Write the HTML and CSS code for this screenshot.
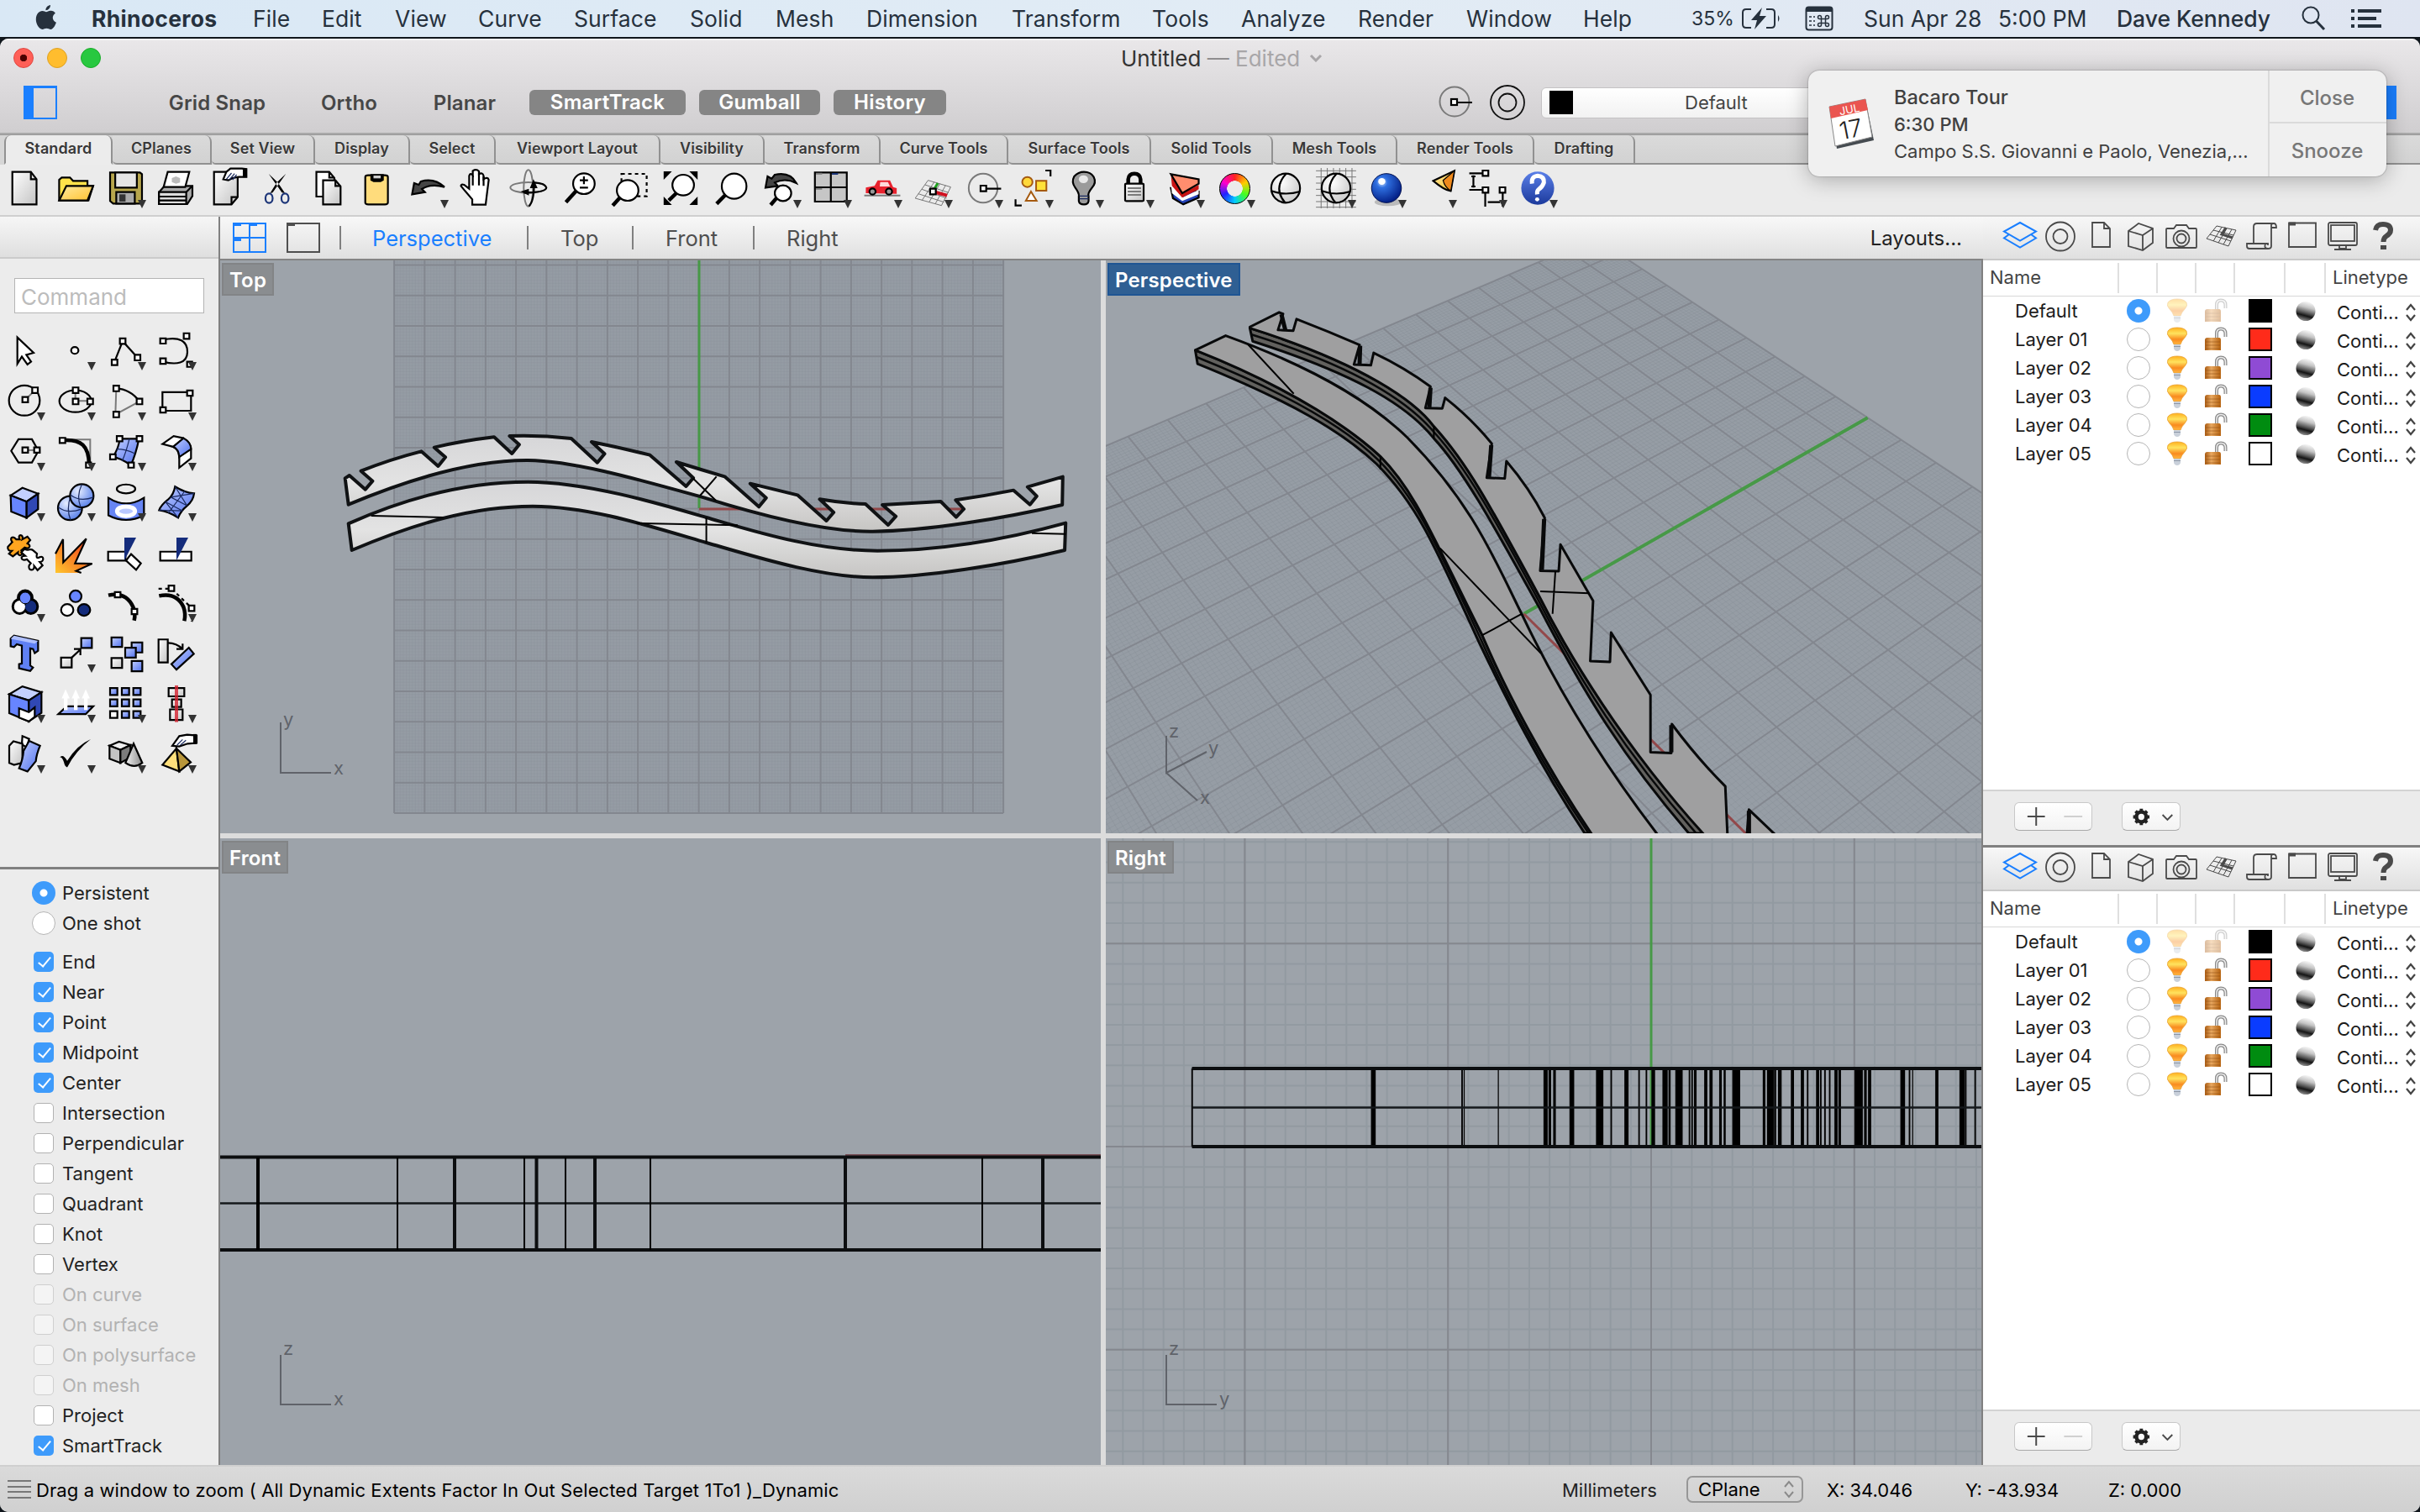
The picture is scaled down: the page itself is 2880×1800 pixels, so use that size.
FILE: index.html
```html
<!DOCTYPE html>
<html lang="en">
<head>
<meta charset="utf-8">
<title>Untitled</title>
<link rel="stylesheet" href="styles.css">
</head>
<body>
<svg class="defs" width="0" height="0">
  <defs>
    <linearGradient id="blue" x1="0" y1="0" x2="1" y2="1"><stop offset="0" stop-color="#c3d0ff"/><stop offset="1" stop-color="#4f70ee"/></linearGradient>
    <linearGradient id="grey" x1="0" y1="0" x2="1" y2="1"><stop offset="0" stop-color="#fff"/><stop offset="1" stop-color="#c4c4c4"/></linearGradient>
    <linearGradient id="cone" x1="0" y1="0" x2="1" y2="0"><stop offset="0" stop-color="#f2f2f2"/><stop offset="1" stop-color="#8a8a8a"/></linearGradient>
    <linearGradient id="gold" x1="0" y1="0" x2="1" y2="1"><stop offset="0" stop-color="#ffe9a0"/><stop offset="1" stop-color="#ffc22e"/></linearGradient>
    <linearGradient id="fire" x1="0" y1="1" x2="1" y2="0"><stop offset="0" stop-color="#ffc62e"/><stop offset=".8" stop-color="#f5511e"/></linearGradient>
    <radialGradient id="ball" cx=".35" cy=".3" r=".8"><stop offset="0" stop-color="#e6edff"/><stop offset="1" stop-color="#4d78e8"/></radialGradient>
    <radialGradient id="white-ball" cx=".35" cy=".3" r=".8"><stop offset="0" stop-color="#fff"/><stop offset="1" stop-color="#c8c8c8"/></radialGradient>
    <radialGradient id="deep-ball" cx=".35" cy=".3" r=".75"><stop offset="0" stop-color="#cfe2ff"/><stop offset=".25" stop-color="#2f6fe0"/><stop offset="1" stop-color="#001a80"/></radialGradient>
    <linearGradient id="help" x1="0" y1="0" x2="0" y2="1"><stop offset="0" stop-color="#5a7fe8"/><stop offset="1" stop-color="#1c3a9c"/></linearGradient>
    <linearGradient id="bulb" x1="0" y1="0" x2="0" y2="1"><stop offset="0" stop-color="#ffb01e"/><stop offset=".35" stop-color="#ffe35e"/><stop offset=".7" stop-color="#f98a1f"/><stop offset="1" stop-color="#ffb640"/></linearGradient>
    <linearGradient id="lock" x1="0" y1="0" x2="1" y2="0"><stop offset="0" stop-color="#a85a12"/><stop offset=".4" stop-color="#e8a860"/><stop offset="1" stop-color="#b5620f"/></linearGradient>
    <linearGradient id="mat" x1=".62" y1="0" x2=".35" y2="1"><stop offset="0" stop-color="#fafafa"/><stop offset=".3" stop-color="#c4c4c4"/><stop offset=".58" stop-color="#555"/><stop offset=".72" stop-color="#151515"/><stop offset="1" stop-color="#9a9a9a"/></linearGradient>
    <linearGradient id="rib" x1="0" y1="0" x2="0" y2="1"><stop offset="0" stop-color="#d6d6d8"/><stop offset=".5" stop-color="#e3e3e3"/><stop offset="1" stop-color="#c6c5c3"/></linearGradient>
  </defs>
</svg>

<header class="menubar">
  <svg class="apple" viewBox="0 0 26 32"><path d="M18 1c.2 3-2.6 6.400-5.600 6.200C12.200 4.300 15 1.200 18 1zM13 9.200c1.300 0 3-1.600 5.600-1.400 2.300.1 4.200 1.200 5.300 3-4.600 2.900-3.900 8.900 1 10.900-1 3-3.500 8.100-6.500 8.200-2 0-2.700-1.200-5-1.200s-3.100 1.200-5 1.200C4.500 29.700.8 23.700.8 18.200.8 11.500 4.800 8 8.300 8c2.200 0 3.600 1.200 4.700 1.200z"/></svg>
  <nav class="menus">
    <b>Rhinoceros</b><span>File</span><span>Edit</span><span>View</span><span>Curve</span><span>Surface</span><span>Solid</span><span>Mesh</span><span>Dimension</span><span>Transform</span><span>Tools</span><span>Analyze</span><span>Render</span><span>Window</span><span>Help</span>
  </nav>
  <div class="status-menus">
    <span class="pct">35%</span>
    <svg viewBox="0 0 48 26"><path d="M12 2H6Q2 2 2 6V20Q2 24 6 24H12M30 2H36Q40 2 40 6V20Q40 24 36 24H30" class="l2"/><path d="M44 9q3 4 0 8z"/><path d="M25 0L12 15H19L16 26L30 10H22z"/></svg>
    <svg viewBox="0 0 34 30"><rect x="1.500" y="1.500" width="31" height="27" rx="3" class="l2"/><path d="M2 2H32V7H2z"/><path d="M5 13h3M5 18h3M5 23h3M10 13h2M10 18h2M10 23h2" class="l1"/><path d="M19.500 15.500h5v5h-5zM19.500 15.500h-2a2 2 0 1 1 2-2zM24.500 15.500v-2a2 2 0 1 1 2 2zM19.500 20.500v2a2 2 0 1 1-2-2zM24.500 20.500h2a2 2 0 1 1-2 2z" class="l1"/></svg>
    <span class="date">Sun Apr 28</span><span>5:00 PM</span><span class="user">Dave Kennedy</span>
    <svg viewBox="0 0 30 30"><circle cx="12" cy="11" r="9.500" class="l2"/><path d="M18.500 18L28 28" class="l3"/></svg>
    <svg viewBox="0 0 36 22"><path d="M0 2h4M0 11h4M0 20h4M8 2h28M8 11h22M8 20h28" class="l4"/></svg>
  </div>
</header>

<div class="window">
  <div class="titlebar">
    <div class="title-row">
      <i class="light close"></i><i class="light mini"></i><i class="light full"></i>
      <span class="doc">Untitled <em>—</em> <em class="pale">Edited</em></span>
      <svg class="chev" viewBox="0 0 16 10"><path d="M2 2l6 6 6-6"/></svg>
    </div>
    <div class="control-row">
      <i class="pane-toggle"></i>
      <span class="opt grid-snap">Grid Snap</span><span class="opt ortho">Ortho</span><span class="opt planar">Planar</span>
      <span class="pill p1">SmartTrack</span><span class="pill p2">Gumball</span><span class="pill p3">History</span>
      <svg class="rec" viewBox="0 0 84 42"><circle cx="19" cy="20" r="17.500" class="g"/><path d="M19 21H40" class="k"/><rect x="15" y="17" width="7" height="7" fill="#fff" class="k"/></svg>
      <svg class="ring" viewBox="0 0 42 42"><circle cx="21" cy="21" r="20"/><circle cx="21" cy="21" r="10.500"/></svg>
      <div class="layer-pop"><i></i><span>Default</span></div>
      <i class="pane-toggle flip"></i>
    </div>
  </div>

  <nav class="tabs">
    <span class="on">Standard</span><span>CPlanes</span><span>Set View</span><span>Display</span><span>Select</span><span>Viewport Layout</span><span>Visibility</span><span>Transform</span><span>Curve Tools</span><span>Surface Tools</span><span>Solid Tools</span><span>Mesh Tools</span><span>Render Tools</span><span>Drafting</span><span class="rest"></span>
  </nav>

  <div class="toolbar tools">
    <i><svg viewBox="0 588 98 180"><path d="M24 614H60L71 640V730H24z" fill="url(#grey)" class="k"/><path d="M60 614V640H71" class="k n"/></svg></i>
    <i><svg viewBox="98 588 98 180"><path d="M115 716V642L120 634H136L142 646H170V664H181L172 716z" fill="#ffe24a" class="k"/><path d="M115 716L129 664H181L170 716z" fill="url(#gold)" class="k"/></svg></i>
    <i class="more"><svg viewBox="196 588 98 180"><path d="M214 616H272L276 622V727H220L214 718z" fill="#b7a64c" class="k"/><rect x="224" y="616" width="42" height="54" fill="#e6e6e6" class="k"/><rect x="226" y="686" width="36" height="41" fill="#aaa" class="k"/><rect x="232" y="694" width="12" height="26" fill="#333"/></svg></i>
    <i><svg viewBox="294 588 98 180"><path d="M309 686L320 664H374V700L364 729H309z" fill="#aaa" class="k"/><path d="M309 686H362V729H309z" fill="#ddd" class="k"/><path d="M326 614H368L360 668H318z" fill="#fff" class="k"/><path d="M309 702H362M309 716H362M362 686L374 664" class="k n"/><path d="M334 636L342 630 350 636V652L342 656 334 650z" fill="#bbb"/></svg></i>
    <i><svg viewBox="392 588 98 180"><path d="M416 614H462V704L450 730H416z" fill="url(#grey)" class="k"/><path d="M462 704H450V730" class="k n"/><path d="M434 640L440 614 448 602H470L479 604V632H464L452 636 444 644z" fill="#fff" class="k"/><path d="M440 640L450 618M446 642L456 620M452 642L460 624" class="k1"/><path d="M472 602h8v32h-8z"/></svg></i>
    <i><svg viewBox="490 588 98 180"><path d="M522 620L548 688 554 690 540 652zM556 620L530 688 525 690 538 652z"/><ellipse cx="523" cy="708" rx="7" ry="17" class="navy"/><ellipse cx="554" cy="708" rx="7" ry="17" class="navy"/></svg></i>
    <i><svg viewBox="588 588 98 180"><path d="M615 614H640L650 636V702H615z" fill="#fff" class="k"/><path d="M628 644H652L662 666V730H628z" fill="url(#grey)" class="k"/><path d="M652 644V664H662M640 614V634H650" class="k n"/></svg></i>
    <i><svg viewBox="686 588 98 180"><rect x="710" y="626" width="44" height="104" rx="6" fill="#ffdc7c" class="k"/><path d="M720 622H746V644L740 650H726L720 644z"/><rect x="726" y="627" width="14" height="10" fill="#ccc"/></svg></i>
    <i class="more"><svg viewBox="784 588 98 180"><path d="M805 654L801 694 826 686 820 675Q838 654 864 668 844 634 818 648L814 660z" fill="#444" class="k"/></svg></i>
    <i><svg viewBox="882 588 98 180"><path d="M918 731V712L904 682 896 664Q896 656 902 660L912 674V628Q914 616 919 626V610Q926 602 931 612V622Q938 614 940 628V640Q948 630 950 642L946 700 944 731z" fill="#fff" class="k"/><path d="M919 626V662M931 616V662M940 630V664" class="k n"/></svg></i>
    <i><svg viewBox="980 588 98 180"><ellipse cx="1027" cy="672" rx="9" ry="65" class="g"/><ellipse cx="1027" cy="670" rx="35" ry="19" class="g"/><path d="M1018 688Q1062 688 1062 670 1060 654 1038 652M1038 660Q1038 720 1028 736" class="k n"/><path d="M1012 684L1028 674V698zM1037 640L1045 672H1030z"/></svg></i>
    <i><svg viewBox="1078 588 98 180"><path d="M1120 682L1100 722" class="k4"/><ellipse cx="1135" cy="656" rx="21" ry="37" fill="#fff" class="k"/><path d="M1127 644H1143M1135 630V658M1127 670H1143" class="k"/></svg></i>
    <i><svg viewBox="1176 588 98 180"><rect x="1208" y="621" width="49" height="80" class="k n dash"/><path d="M1208 700L1191 734" class="k4"/><ellipse cx="1220" cy="680" rx="21" ry="37" fill="#fff" class="k"/></svg></i>
    <i><svg viewBox="1274 588 98 180"><path d="M1290 612h16l-16 30zM1356 612h-16l16 30zM1290 732h16l-16-30zM1356 732h-16l16-30z"/><path d="M1318 684L1300 716" class="k4"/><ellipse cx="1328" cy="661" rx="21" ry="37" fill="#fff" class="k"/></svg></i>
    <i><svg viewBox="1372 588 98 180"><path d="M1410 696L1393 728" class="k4"/><ellipse cx="1427" cy="665" rx="24" ry="45" fill="#fff" class="k"/></svg></i>
    <i class="more"><svg viewBox="1470 588 98 180"><path d="M1510 706L1498 732" class="k4"/><ellipse cx="1522" cy="690" rx="16" ry="28" fill="#fff" class="k"/><path d="M1492 630L1488 670 1512 664 1506 652Q1526 634 1548 654 1536 612 1506 624L1500 638z" fill="#444" class="k"/></svg></i>
    <i class="more"><svg viewBox="0 588 98 180"><rect x="16" y="616" width="62" height="104" fill="#c6c6c6" class="k"/><path d="M16 669H78M47 616V720" class="k"/><path d="M18 620h12M18 674h12" class="g"/><path d="M49 621h12" class="navy"/></svg></i>
    <i class="more"><svg viewBox="98 588 98 180"><path d="M112 698H182" class="g"/><path d="M115 690V670L132 664 138 644H162L168 668 175 672V692z" fill="#e8222e"/><path d="M143 650H158L162 666H142z" fill="#ffd9d9"/><ellipse cx="128" cy="684" rx="6" ry="11" fill="#999" class="k"/><ellipse cx="160" cy="684" rx="6" ry="11" fill="#999" class="k"/></svg></i>
    <i class="more"><svg viewBox="196 588 98 180"><path d="M236 644L280 668M230 660L276 688M224 676L272 708M217 692L267 722M211 708L262 734M236 644L211 708M248 650L224 716M259 656L238 722M270 662L250 728M280 668L262 734" class="g1"/><path d="M245 684L273 698" class="red"/><path d="M245 684L255 654" class="grn"/><rect x="240" y="674" width="11" height="20" class="h"/></svg></i>
    <i class="more"><svg viewBox="294 588 98 180"><ellipse cx="343" cy="672" rx="28" ry="52" class="g"/><path d="M343 674H378" class="k"/><rect x="338" y="663" width="11" height="20" class="h"/></svg></i>
    <i class="more"><svg viewBox="392 588 98 180"><ellipse cx="429" cy="650" rx="10" ry="18" fill="#ffd83a" class="or"/><rect x="446" y="646" width="20" height="35" fill="#ffe23a" class="or"/><path d="M436 684L426 717H447z" fill="#fff" class="or"/><path d="M464 609H474V630M406 712V734H418" class="k n"/></svg></i>
    <i class="more"><svg viewBox="490 588 98 180"><path d="M529 700Q530 690 522 670 514 650 520 630 528 614 539 614 552 614 558 632 564 652 554 672 546 690 548 700V718Q547 730 539 730 530 730 529 718z" fill="#9b9b9b" class="k"/><path d="M530 700h18M530 710h18" class="k1"/><ellipse cx="538" cy="640" rx="9" ry="14" fill="#e8e8e8"/></svg></i>
    <i class="more"><svg viewBox="588 588 98 180"><path d="M625 660V640Q626 620 637 620 648 620 649 640V660" class="k4"/><rect x="619" y="656" width="36" height="62" rx="3" fill="url(#grey)" class="k"/><path d="M624 672H650M624 684H650M624 696H650" class="g"/></svg></i>
    <i class="more"><svg viewBox="686 588 98 180"><path d="M708 672L712 708 732 730 762 706V684z" fill="#2443b8" class="k"/><path d="M708 655L732 704 762 678V694L730 718 710 690z" fill="#fff"/><path d="M708 622L732 690 762 660V676L730 706 710 664z" fill="#c81414"/><path d="M708 622L762 640V656L730 690z" fill="#ff8d6e" class="k"/></svg></i>
    <i class="more"><b class="wheel"></b></i>
    <i><svg viewBox="882 588 98 180"><ellipse cx="931" cy="672" rx="28" ry="52" fill="url(#white-ball)" class="k"/><path d="M903 682Q930 700 959 684M932 620Q906 672 930 724" class="k n"/></svg></i>
    <i class="more"><svg viewBox="980 588 98 180"><path d="M1000 600V744M1012 600V744M1024 600V744M1036 600V744M1048 600V744M1060 600V744M990 610H1068M990 632H1068M990 654H1068M990 676H1068M990 698H1068M990 720H1068M990 740H1068" class="g1"/><ellipse cx="1029" cy="672" rx="28" ry="52" fill="url(#white-ball)" class="k"/><path d="M1001 682Q1028 700 1057 684M1030 620Q1004 672 1028 724" class="k n"/></svg></i>
    <i class="more"><svg viewBox="1078 588 98 180"><ellipse cx="1130" cy="722" rx="26" ry="14" fill="#bbb"/><ellipse cx="1127" cy="672" rx="29" ry="52" fill="url(#deep-ball)" stroke="#001050"/><ellipse cx="1118" cy="648" rx="7" ry="12" fill="#fff"/></svg></i>
    <i class="more"><svg viewBox="1176 588 98 180"><path d="M1218 646L1259 610 1252 682Q1240 680 1218 646z" fill="url(#gold)" class="k"/><path d="M1259 610L1252 682Q1240 668 1237 644z" fill="#f08a1c" class="k1"/></svg></i>
    <i class="more"><svg viewBox="1274 588 98 180"><path d="M1288 619H1314M1288 678H1314M1296 626V670M1292 630h8M1292 666h8M1319 688V738M1353 688V738M1324 722H1348" class="k"/><rect x="1314" y="609" width="11" height="19" class="h"/><rect x="1314" y="669" width="11" height="19" class="h"/><rect x="1347" y="669" width="11" height="19" class="h"/></svg></i>
    <i class="more"><svg viewBox="1372 588 98 180"><ellipse cx="1421" cy="672" rx="32" ry="59" fill="url(#help)"/><path d="M1410 656Q1408 630 1421 628 1434 630 1433 652 1430 668 1423 676 1419 682 1420 694" class="w4"/><ellipse cx="1420" cy="712" rx="4" ry="7" fill="#fff"/></svg></i>
  </div>

  <div class="main">
    <aside class="left">
      <div class="strip"></div>
      <div class="command">Command</div>
      <div class="palette tools">
        <i><svg viewBox="0 218 180 147"><path d="M62 249V326L78 305 98 328 111 320 94 300 120 294z" fill="#fff" class="k"/></svg></i>
        <i class="more"><svg viewBox="180 218 180 147"><ellipse cx="267" cy="287" rx="13" ry="10" fill="#fff" class="k"/></svg></i>
        <i class="more"><svg viewBox="360 218 180 147"><path d="M408 322L438 260 491 308" class="k n"/><rect x="399" y="314" width="20" height="16" class="h"/><rect x="428" y="252" width="20" height="16" class="h"/><rect x="481" y="300" width="20" height="16" class="h"/></svg></i>
        <i class="more"><svg viewBox="540 218 180 147"><path d="M582 256C640 245 670 260 669 292 668 325 630 330 582 320" class="k n"/><rect x="572" y="252" width="20" height="15" class="h"/><rect x="656" y="237" width="20" height="16" class="h"/><rect x="572" y="310" width="20" height="16" class="h"/><rect x="668" y="320" width="18" height="15" class="h"/></svg></i>

        <i class="more"><svg viewBox="0 365 180 147"><ellipse cx="87" cy="433" rx="55" ry="44" class="k n"/><path d="M90 431L125 403" class="g"/><rect x="80" y="423" width="20" height="15" class="h"/><rect x="115" y="395" width="20" height="16" class="h"/></svg></i>
        <i class="more"><svg viewBox="180 365 180 147"><ellipse cx="269" cy="435" rx="57" ry="32" class="k n"/><path d="M269 404V434H322" class="g"/><rect x="260" y="395" width="20" height="16" class="h"/><rect x="260" y="428" width="20" height="16" class="h"/><rect x="312" y="428" width="20" height="16" class="h"/></svg></i>
        <i class="more"><svg viewBox="360 365 180 147"><path d="M415 398L412 474 498 436" class="g"/><path d="M415 398Q465 400 498 436" class="k n"/><rect x="405" y="390" width="20" height="16" class="h"/><rect x="405" y="466" width="20" height="16" class="h"/><rect x="488" y="428" width="20" height="16" class="h"/></svg></i>
        <i class="more"><svg viewBox="540 365 180 147"><rect x="580" y="409" width="102" height="54" class="k n"/><rect x="668" y="404" width="20" height="15" class="h"/><rect x="572" y="453" width="20" height="15" class="h"/></svg></i>

        <i class="more"><svg viewBox="0 512 180 147"><path d="M40 580L66 546H114L137 580 114 614H66z" class="k n"/><path d="M90 578H132" class="g"/><rect x="80" y="570" width="20" height="15" class="h"/><rect x="122" y="570" width="20" height="15" class="h"/></svg></i>
        <i class="more"><svg viewBox="180 512 180 147"><path d="M223 547H322V622" class="g"/><path d="M223 549C290 545 318 565 318 622" class="k4"/><rect x="213" y="542" width="20" height="15" class="h"/><rect x="307" y="614" width="18" height="15" class="h"/></svg></i>
        <i class="more"><svg viewBox="360 512 180 147"><path d="M427 545H496Q485 590 467 622 430 600 403 598 425 570 427 545z" fill="url(#blue)" class="k"/><path d="M462 545Q450 585 436 610M415 575Q450 575 482 588" class="k1"/><rect x="417" y="537" width="20" height="15" class="h"/><rect x="488" y="537" width="20" height="15" class="h"/><rect x="393" y="590" width="20" height="15" class="h"/><rect x="458" y="614" width="20" height="15" class="h"/></svg></i>
        <i class="more"><svg viewBox="540 512 180 147"><path d="M580 560L620 537 655 543Q680 555 682 575V602L640 629V598Q640 575 618 568z" fill="#fff" class="k"/><path d="M618 568L655 543Q682 555 682 575L640 598Q638 575 618 568z" fill="url(#blue)" class="k"/></svg></i>

        <i class="more"><svg viewBox="0 659 180 147"><path d="M38 710L80 688 136 705 95 728z" fill="#c3d0ff" class="k"/><path d="M38 710L95 728V775L40 757z" fill="#6785ff" class="k"/><path d="M95 728L136 705V750L95 775z" fill="#3048b4" class="k"/></svg></i>
        <i class="more"><svg viewBox="180 659 180 147"><ellipse cx="250" cy="747" rx="43" ry="35" fill="url(#ball)" class="k"/><path d="M208 744Q240 765 290 750M252 712Q236 750 252 782" class="k1"/><ellipse cx="292" cy="711" rx="42" ry="34" fill="url(#ball)" class="k"/><path d="M251 708Q285 730 334 715M292 678Q272 712 288 745" class="k1"/></svg></i>
        <i class="more"><svg viewBox="360 659 180 147"><ellipse cx="450" cy="691" rx="33" ry="13" class="k n"/><path d="M387 717Q450 750 514 717V768Q450 795 387 768z" fill="#6785f4" class="k"/><ellipse cx="450" cy="756" rx="32" ry="14" fill="#b9c8ff" class="w3"/></svg></i>
        <i class="more"><svg viewBox="540 659 180 147"><path d="M625 684Q660 702 693 704 690 725 668 740 645 755 636 775 600 756 568 753 575 738 600 722 620 708 625 684z" fill="url(#blue)" class="k"/><path d="M610 715L668 740M590 728L652 755M660 697L600 762M625 684L668 740M693 704L610 715M590 728L636 775M568 753L652 755" class="k1"/></svg></i>

        <i><svg viewBox="0 806 180 147"><path d="M28 860L44 846C32 834 46 826 58 838L70 838C60 822 86 822 80 838L98 830 108 840 98 850C114 856 104 868 88 862L76 870C88 886 62 890 64 876L46 888 32 880 42 872C32 872 26 868 28 860z" fill="#ffa51f" class="k"/><path d="M88 866C104 874 108 862 118 870L132 880C128 894 134 894 142 890 158 884 158 904 142 904L152 914 134 928 122 916C124 932 98 930 104 914L110 908 96 896C76 904 68 886 90 886L76 876z" fill="#fff" class="k"/></svg></i>
        <i><svg viewBox="180 806 180 147"><path d="M198 936V880L225 838 226 905 308 836 268 908 329 909 272 930 290 936z" fill="url(#fire)"/><path d="M198 880L225 838 226 905 308 836 268 908 329 909 272 930 290 936" class="k n"/></svg></i>
        <i><svg viewBox="360 806 180 147"><rect x="386" y="874" width="62" height="26" fill="#fff" class="k"/><path d="M468 881L503 908 486 927 450 900z" fill="#fff" class="k"/><path d="M444 833H486L444 900z" fill="#142c7c"/></svg></i>
        <i><svg viewBox="540 806 180 147"><rect x="572" y="874" width="111" height="26" fill="#fff" class="k"/><path d="M630 833H672L630 900z" fill="#142c7c"/></svg></i>

        <i class="more"><svg viewBox="0 953 180 147"><g class="k4"><ellipse cx="70" cy="1034" rx="22" ry="19"/><ellipse cx="110" cy="1034" rx="22" ry="19"/><ellipse cx="90" cy="1008" rx="23" ry="19"/></g><ellipse cx="70" cy="1034" rx="20" ry="17" fill="#fff"/><ellipse cx="110" cy="1034" rx="20" ry="17" fill="#142c7c"/><ellipse cx="90" cy="1009" rx="20" ry="17" fill="#6785ff" stroke="#000"/></svg></i>
        <i><svg viewBox="180 953 180 147"><ellipse cx="270" cy="1004" rx="21" ry="17" fill="#6785ff" class="k"/><ellipse cx="240" cy="1044" rx="22" ry="17" fill="#fff" class="k"/><ellipse cx="300" cy="1044" rx="22" ry="17" fill="#142c7c" class="k"/></svg></i>
        <i><svg viewBox="360 953 180 147"><path d="M387 1001Q450 990 475 1035 485 1055 479 1075" class="k4"/><rect x="410" y="992" width="20" height="15" class="h"/><rect x="470" y="1041" width="20" height="15" class="h"/></svg></i>
        <i class="more"><svg viewBox="540 953 180 147"><path d="M568 1003Q630 992 655 1035 664 1055 658 1076" class="k4"/><path d="M566 982H612L684 1038V1078" class="k n dash"/><rect x="602" y="973" width="20" height="16" class="h"/><rect x="674" y="1031" width="20" height="16" class="h"/></svg></i>

        <i><svg viewBox="0 1100 180 147"><path d="M38 1128L50 1119 136 1134 136 1163 124 1170 118 1158 108 1156V1206L118 1212 108 1222 68 1214V1202L78 1200V1148L60 1144 50 1152 38 1150z" fill="#5f80f4" class="k"/><path d="M38 1128L124 1142 136 1134 50 1119z" fill="#aebfff"/></svg></i>
        <i class="more"><svg viewBox="180 1100 180 147"><rect x="218" y="1183" width="38" height="29" fill="url(#grey)" class="k"/><rect x="290" y="1126" width="38" height="29" fill="url(#blue)" class="k"/><path d="M256 1183L286 1160M264 1158H287V1176" class="k n"/></svg></i>
        <i><svg viewBox="360 1100 180 147"><rect x="398" y="1124" width="38" height="28" fill="url(#blue)" class="k"/><rect x="398" y="1184" width="38" height="29" fill="url(#grey)" class="k"/><rect x="470" y="1139" width="38" height="29" fill="url(#blue)" class="k"/><rect x="447" y="1154" width="38" height="29" fill="url(#blue)" class="k"/><rect x="470" y="1193" width="38" height="30" fill="url(#blue)" class="k"/></svg></i>
        <i><svg viewBox="540 1100 180 147"><rect x="566" y="1130" width="33" height="67" fill="url(#grey)" class="k"/><path d="M674 1154L692 1172 630 1218 612 1202z" fill="url(#blue)" class="k"/><path d="M600 1140Q630 1140 652 1158M652 1142V1158H630" class="k n"/></svg></i>

        <i class="more"><svg viewBox="0 1247 180 147"><path d="M33 1290L80 1267 148 1284 103 1308z" fill="#c3d0ff" class="k"/><path d="M33 1290L103 1308V1369L33 1345z" fill="#6785ff" class="k"/><path d="M103 1308L148 1284V1344L103 1369z" fill="#3048b4" class="k"/><path d="M68 1331L103 1342 124 1328V1356L103 1369 68 1358z" fill="#fff" class="k"/></svg></i>
        <i class="more"><svg viewBox="180 1247 180 147"><path d="M238 1325H333L306 1348H208z" fill="url(#blue)" class="k"/><path d="M228 1336V1302H220L234 1275 249 1302H241V1336zM264 1336V1302H256L270 1275 285 1302H277V1336zM300 1336V1302H292L306 1275 321 1302H313V1336z" fill="#fff"/></svg></i>
        <i class="more"><svg viewBox="360 1247 180 147"><g fill="url(#blue)" class="k"><rect x="393" y="1272" width="26" height="20"/><rect x="435" y="1272" width="26" height="20"/><rect x="476" y="1272" width="26" height="20"/><rect x="393" y="1305" width="26" height="20"/><rect x="435" y="1305" width="26" height="20"/><rect x="476" y="1305" width="26" height="20"/><rect x="435" y="1339" width="26" height="20"/><rect x="476" y="1339" width="26" height="20"/></g><rect x="393" y="1339" width="26" height="20" fill="#fff" class="k"/></svg></i>
        <i class="more"><svg viewBox="540 1247 180 147"><rect x="602" y="1272" width="56" height="24" fill="url(#grey)" class="k"/><rect x="614" y="1305" width="33" height="22" fill="url(#grey)" class="k"/><rect x="607" y="1334" width="45" height="31" fill="url(#grey)" class="k"/><rect x="624" y="1264" width="12" height="107" fill="#d4202e" fill-opacity=".8"/></svg></i>

        <i class="more"><svg viewBox="0 1394 180 147"><path d="M80 1412L104 1420 96 1445 78 1436z" fill="#fff" class="k"/><path d="M33 1440L48 1427 80 1434V1490L50 1496 33 1490z" fill="url(#grey)" class="k"/><path d="M104 1426L143 1440Q130 1465 128 1485L98 1515 68 1506Q82 1480 84 1455z" fill="url(#blue)" class="k"/></svg></i>
        <i class="more"><svg viewBox="180 1394 180 147"><path d="M213 1474Q225 1462 240 1484 275 1438 324 1421 270 1455 240 1503 232 1502 228 1488 222 1472 213 1474z"/></svg></i>
        <i class="more"><svg viewBox="360 1394 180 147"><path d="M391 1440L425 1428 466 1438 430 1452z" fill="#f0f0f0" class="k"/><path d="M391 1440L430 1452V1490L391 1478z" fill="#c4c4c4" class="k"/><path d="M430 1452L466 1438V1474L430 1490z" fill="#7c7c7c" class="k"/><path d="M477 1434L508 1490Q480 1508 448 1490z" fill="url(#cone)" class="k"/></svg></i>
        <i class="more"><svg viewBox="540 1394 180 147"><path d="M615 1440L640 1412 668 1408 702 1410V1432L670 1434 640 1442z" fill="#fff" class="k"/><path d="M632 1438L652 1422M644 1438L664 1424" class="k1"/><path d="M690 1406h12v29h-12z"/><path d="M630 1448L580 1496 640 1515z" fill="#ffe07c" class="k"/><path d="M630 1448L681 1488 640 1515z" fill="#b8963a" class="k"/></svg></i>
      </div>
      <div class="osnaps">
        <label class="radio on"><i></i>Persistent</label>
        <label class="radio"><i></i>One shot</label>
        <div class="checks">
          <label class="on"><i></i>End</label><label class="on"><i></i>Near</label><label class="on"><i></i>Point</label><label class="on"><i></i>Midpoint</label><label class="on"><i></i>Center</label>
          <label><i></i>Intersection</label><label><i></i>Perpendicular</label><label><i></i>Tangent</label><label><i></i>Quadrant</label><label><i></i>Knot</label><label><i></i>Vertex</label>
          <label class="off"><i></i>On curve</label><label class="off"><i></i>On surface</label><label class="off"><i></i>On polysurface</label><label class="off"><i></i>On mesh</label>
          <label><i></i>Project</label><label class="on"><i></i>SmartTrack</label>
        </div>
      </div>
    </aside>

    <section class="center">
      <div class="viewbar">
        <svg class="four" viewBox="0 0 40 36"><path d="M1 1H39V35H1zM1 18H39M20 1V35" /><path d="M2 2h8M21 2h8M2 20h8" class="t"/></svg>
        <svg class="one" viewBox="0 0 40 36"><path d="M1 1H39V35H1z"/><path d="M2 2h8" class="t"/></svg>
        <span class="v1 on">Perspective</span><span class="v2">Top</span><span class="v3">Front</span><span class="v4">Right</span>
        <span class="layouts">Layouts...</span>
      </div>
      <div class="views">
        <div class="view">
          <b class="name">Top</b>
          <svg viewBox="262 310 1048 682">
            <rect x="469" y="243" width="725" height="725" fill="#959ca4"/>
            <path id="top-minor" class="top-minor"/><path id="top-major" class="major"/>
            <path d="M832 310V605" class="axis-g"/><path d="M832 606H1160" class="axis-r"/>
            <g transform="translate(390 480) scale(.574 .3333)" class="model">
              <path fill="url(#rib)" d="M43 362L36 268 45 258 78 308 93 278 69 242Q130 200 194 172L229 225 244 193 221 158Q280 134 345 121L382 180 397 148 377 117Q440 113 505 126L559 212 574 181 547 138Q610 160 668 185L743 297 758 267 723 210Q775 238 823 262L894 370 909 338 876 287 974 328 1034 420 1049 390 1020 343Q1065 357 1115 360L1162 435 1178 404 1150 363 1271 351 1303 407 1319 378 1302 346Q1360 332 1422 311L1456 362 1470 332 1451 299 1524 263 1523 363C1400 412 1240 457 1130 458 1030 460 900 402 780 337 650 275 510 205 415 204 300 203 170 270 43 362z"/>
              <path fill="url(#rib)" d="M43 430C160 340 290 281 415 281 540 281 700 365 785 408 880 455 1010 527 1140 527 1270 527 1400 490 1530 428L1528 525C1400 578 1240 622 1130 622 1020 622 880 545 785 498 660 435 540 368 425 368 300 368 180 430 50 525z"/>
              <path class="thin" d="M90 402L240 408M640 429L850 436M785 408V498M1460 464L1530 467M757 268L805 348M806 262L772 330"/>
            </g>
            <path d="M334 860V920H394" class="gizmo"/><text x="337" y="864">y</text><text x="397" y="922">x</text>
          </svg>
        </div>
        <div class="view">
          <b class="name active">Perspective</b>
          <svg viewBox="1316 310 1042 682">
            <g transform="translate(1310 300) scale(.6696 .4464)">
              <path id="plane" fill="#969da5"/><path id="persp-minor" class="persp-minor"/><path id="persp-major" class="major"/>
              <path d="M752 965L1363 442" class="axis-g wide"/><path d="M752 965L1455 2009" class="axis-r"/>
              <g class="model m2">
                <path fill="#62615e" d="M265 203C470 300 560 400 592 465 650 560 690 670 780 920 830 1070 930 1320 1072 1550H1045C930 1350 860 1180 780 950 720 790 650 590 592 497 540 400 440 320 270 238z"/>
                <path fill="#9f9fa0" d="M265 200L317 161 324 165 315 208 342 210 348 179Q405 212 460 248L450 300 480 302 485 269Q540 308 586 359L577 416 607 417 612 389Q660 446 695 511L686 602 718 604 721 558 Q762 630 789 709L781 850 814 851 817 780 875 930 870 1091 905 1093 907 1015 977 1181V1334L1014 1336 1015 1259Q1060 1350 1110 1425L1114 1560H1076C930 1320 830 1070 780 920 690 670 650 560 592 465 560 400 470 300 265 203z"/>
                <path fill="#9f9fa0" d="M1148 1560L1152 1487 1203 1560"/>
                <path class="fat" d="M321 166L328 208M461 250L460 298M586 362L584 414M694 515L690 600M788 712L784 848M1014 1262V1334M1152 1490V1560"/>
                <path fill="#62615e" d="M168 262C350 370 450 480 497 545 560 640 590 760 678 1022 720 1170 790 1370 873 1550H860C780 1370 720 1190 672 1040 590 770 560 670 490 565 430 480 340 400 172 298z"/>
                <path fill="#9f9fa0" d="M222 223C400 320 490 415 545 495 660 670 700 820 748 965 810 1160 890 1360 993 1560H876C790 1370 720 1170 678 1022 590 760 560 640 497 545 450 480 350 370 168 262z"/>
                <path class="edge" d="M170 280C345 385 440 475 494 556 560 655 592 765 675 1031 718 1178 785 1370 867 1550M268 220C460 310 550 405 592 480 650 575 700 710 780 935 850 1140 930 1330 1058 1550"/>
                <path class="thin" d="M262 247L343 378M603 790L782 1070M678 1022L748 965M808 851L803 965M781 905L868 910M592 465V497M497 545V580"/>
              </g>
            </g>
            <path d="M1388 876V920L1436 895M1388 920L1425 953" class="gizmo"/><text x="1391" y="878">z</text><text x="1438" y="898">y</text><text x="1428" y="957">x</text>
          </svg>
        </div>
        <div class="view">
          <b class="name">Front</b>
          <svg viewBox="262 998 1048 746">
            <path d="M1006 1375H1310" stroke="#6b3238" stroke-width="1.500"/>
            <path d="M262 1377.500H1310M262 1488H1310" class="b4"/><path d="M262 1432.500H1310" class="b3"/>
            <path d="M307 1378V1488" stroke="#000" stroke-width="4"/>
            <path d="M541 1378V1488M638.500 1378V1488M708 1378V1488M1006 1378V1488M1241 1378V1488" class="b4"/>
            <path d="M473 1378V1488M624 1378V1488M673 1378V1488M774 1378V1488M1169 1378V1488" class="b2"/>
            <path d="M334 1613V1672H394" class="gizmo"/><text x="337" y="1613">z</text><text x="397" y="1673">x</text>
          </svg>
        </div>
        <div class="view">
          <b class="name">Right</b>
          <svg viewBox="1316 998 1042 746">
            <path id="right-minor" class="right-minor"/><path id="right-major" class="right-major"/>
            <path d="M1965 998V1365" class="axis-g"/>
            <path id="right-bars" fill="#000"/>
            <path d="M1418.500 1272H2358M1418.500 1365H2358" class="b4"/><path d="M1419 1318.500H2358" class="b3"/>
            <path d="M1388 1613V1672H1448" class="gizmo"/><text x="1391" y="1613">z</text><text x="1451" y="1673">y</text>
          </svg>
        </div>
      </div>
    </section>

    <aside class="right">
      <section class="panel" id="layers">
        <div class="panel-tabs">
          <svg viewBox="0 0 48 50" class="sel"><path d="M24 8L43 18.500 24 29.500 5 18.500zM11 22L5 26.500 24 37.500 43 26.500 37 22"/></svg>
          <svg viewBox="0 0 48 50"><circle cx="24" cy="24.500" r="17"/><circle cx="24" cy="24.500" r="8.500"/></svg>
          <svg viewBox="0 0 48 50"><path d="M14 8H28L35 15V37H14zM28 8V15H35"/></svg>
          <svg viewBox="0 0 48 50"><path d="M9 18L21 9 38 15V32L26 41 9 36zM9 18L26 23 38 15M26 23V41"/></svg>
          <svg viewBox="0 0 48 50"><path d="M7 15H15L18 11H30L33 15H41Q42 15 42 16V37Q42 38 41 38H7Q6 38 6 37V16Q6 15 7 15z"/><circle cx="24" cy="27" r="9.500"/><circle cx="24" cy="27" r="5.500"/></svg>
          <svg viewBox="0 0 48 50"><path d="M18 12L41 17 32 36 6 27zM24 13.500L14 30M30 15L20 32M36 16L26 34M14 17L38 23M10 22L35 30" stroke-width="1"/><path d="M29 14L24 22 37 26" stroke-width="3"/></svg>
          <svg viewBox="0 0 48 50"><path d="M14 33V13Q14 9 18 9H38Q41 9 41 14H35V11Q35 9 38 9M35 14V36Q35 39 31 39H9Q6 39 6 36V33H28Q26 39 31 39M28 33H31V35"/></svg>
          <svg viewBox="0 0 48 50"><path d="M8 8.500H40V37H8z"/><path d="M8 9.500h8" stroke-width="4"/></svg>
          <svg viewBox="0 0 48 50"><rect x="7" y="8" width="34" height="27" rx="2"/><rect x="10" y="11" width="28" height="19"/><path d="M20 35v4H28v-4M14 40H34"/></svg>
          <svg viewBox="0 0 48 50"><path d="M15 17Q16 10 24 10 33 10 33 17 33 21 28 24 24.500 26 24.500 31" stroke-width="6"/><path d="M21 35h7v5h-7z" fill="#4a4a4a" stroke="none"/></svg>
        </div>
        <div class="row head"><span>Name</span><span></span><span></span><span></span><span></span><span></span><span>Linetype</span></div>
        <div class="list"></div>
        <div class="foot">
          <span class="btn add"><svg viewBox="0 0 92 32"><path d="M15 16H36M25.500 5V27"/><path d="M59 16H81" class="dis"/></svg></span>
          <span class="btn gear"><svg viewBox="0 0 70 32"><g transform="translate(23 16.500)"><circle r="6" class="gr"/><path d="M0-10V-6M0 10V6M-10 0H-6M10 0H6M-7-7L-5-5M7 7L5 5M7-7L5-5M-7 7L-5 5" class="gt"/></g><path d="M49 14l6 6 6-6"/></svg></span>
        </div>
      </section>
    </aside>
  </div>

  <footer class="statusbar">
    <i class="grip"></i>
    <span class="prompt">Drag a window to zoom ( All Dynamic Extents Factor In Out Selected Target 1To1 )_Dynamic</span>
    <span class="unit">Millimeters</span>
    <span class="cplane">CPlane<svg viewBox="0 0 14 22"><path d="M2 8l5-6 5 6M2 14l5 6 5-6"/></svg></span>
    <span class="cx">X: 34.046</span><span class="cy">Y: -43.934</span><span class="cz">Z: 0.000</span>
  </footer>
</div>

<div class="note">
  <svg viewBox="0 0 60 60"><path d="M4 12L46 2 56 50 12 60z" fill="#454b50"/><path d="M3 10L46 1 54 46 10 57z" fill="#fff" stroke="#888" stroke-width="1"/><path d="M3 10L46 1 49 14 5 24z" fill="#ea5550"/><text x="27" y="18" transform="rotate(-11 27 14)" class="mon">JUL</text><text x="29" y="47" transform="rotate(-11 29 38)" class="day">17</text></svg>
  <div class="text"><b>Bacaro Tour</b><b class="time">6:30 PM</b><span>Campo S.S. Giovanni e Paolo, Venezia,...</span></div>
  <div class="acts"><span>Close</span><span>Snooze</span></div>
</div>
<script src="app.js"></script>
</body>
</html>
```
FILE: styles.css
```css
* { box-sizing: border-box; }
body { margin: 0; width: 2880px; height: 1800px; overflow: hidden; background: #10161c; font-family: Inter, "Liberation Sans", sans-serif; font-size: 22px; color: #222; position: relative; }
i, em { font-style: normal; }
svg { display: block; }
.defs { position: absolute; }
span, b, label { white-space: nowrap; }

.menubar { height: 44px; display: flex; align-items: center; background: linear-gradient(90deg, #d9e8f5, #e2ecf5 55%, #dfe5f1); color: #26313d; font-size: 26.500px; margin-bottom: 2px; }
.apple { width: 26px; height: 32px; margin: -3px 0 0 42px; fill: #26313d; }
.menus { display: grid; grid-template-columns: 192px 82px 87px 99px 114px 138px 102px 108px 173px 167px 106px 139px 129px 139px 84px; margin-left: 41px; }
.menus b { font-weight: 700; letter-spacing: .3px; }
.menus span { letter-spacing: .1px; }
.status-menus { display: grid; align-items: center; grid-template-columns: 59px 76px 70px 160px 141px 219px 60px 36px; margin-left: 45px; }
.status-menus svg { fill: #26313d; }
.status-menus svg:nth-child(2) { width: 48px; height: 26px; }
.status-menus svg:nth-child(3) { width: 34px; height: 30px; }
.status-menus svg:nth-child(7) { width: 30px; height: 30px; }
.status-menus svg:nth-child(8) { width: 36px; height: 22px; }
.pct { font-size: 23px; }
.user { font-weight: 500; }
.status-menus .l1, .l2, .l3, .l4 { fill: none; stroke: #26313d; stroke-width: 2; }
.status-menus .l1 { stroke-width: 1.500px; }
.l3 { stroke-width: 3; }
.l4 { stroke-width: 4; }
.status-menus .l2, .status-menus .l3, .status-menus .l4 { fill: none; }

.window { width: 2880px; height: 1754px; border-radius: 10px; overflow: hidden; background: #ececec; }
.titlebar { height: 114px; background: linear-gradient(#e9e7e9, #d0ced0); border-bottom: 2px solid #a9a9a9; border-top: 2px solid #f4f3f4; }
.title-row { height: 42px; display: flex; align-items: center; padding-left: 16px; }
.light { width: 24px; height: 24px; border-radius: 50%; margin-right: 16px; border: 1px solid #e0443e; background: #ff5f57; }
.close { background: radial-gradient(circle, #4d0000 0 4px, #ff5f57 4.500px); }
.mini { background: #ffbd2e; border-color: #dea123; }
.full { background: #28c840; border-color: #1aab29; }
.doc { font-size: 26px; margin-left: 1198px; width: 224px; color: #333; }
.doc em { color: #8f8d8f; }
.doc .pale { color: #a8a6a8; }
.chev { width: 16px; height: 10px; fill: none; stroke: #a8a6a8; stroke-width: 3; }
.control-row { height: 64px; display: flex; align-items: center; padding-left: 28px; }
.pane-toggle { width: 40px; height: 40px; border: 2px solid #1a7fff; border-left-width: 12px; border-top-width: 3px; }
.pane-toggle.flip { margin-left: auto; margin-right: 28px; border-left-width: 2px; border-right-width: 12px; }
.opt { font-size: 24px; font-weight: 600; color: #474747; text-align: center; letter-spacing: .15px; }
.grid-snap { margin-left: 105px; width: 171px; }
.ortho { width: 143px; }
.planar { width: 132px; }
.pill { height: 30px; line-height: 30px; border-radius: 6px; background: #858585; color: #fff; font-size: 24px; font-weight: 600; letter-spacing: .25px; text-align: center; margin-right: 16px; }
.p1 { width: 186px; margin-left: 11px; }
.p2 { width: 144px; }
.p3 { width: 134px; }
.rec { width: 84px; height: 42px; margin-left: 570px; margin-right: -23px; }
.ring { width: 42px; height: 42px; fill: none; stroke: #111; stroke-width: 1.800px; }
.layer-pop { width: 420px; height: 37px; margin-left: 19px; border-radius: 6px; background: linear-gradient(#fff, #f2f2f2); border: 1px solid #c4c2c4; display: flex; align-items: center; }
.layer-pop i { width: 28px; height: 28px; background: #000; margin-left: 9px; }
.layer-pop span { font-size: 22px; margin-left: 133px; color: #444; }

.tabs { height: 36px; display: grid; grid-template-columns: 129px 118px 123px 113px 102px 196px 124px 138px 152px 170px 145px 148px 163px 120px 1fr; padding-left: 5px; background: #d6d6d6; border-top: 1px solid #999; }
.tabs span { font-size: 18px; font-weight: 600; letter-spacing: .1px; color: #383838; text-align: center; line-height: 32px; border-right: 2px solid #919191; border-bottom: 2px solid #919191; border-radius: 0 8px 0 5px; text-shadow: 0 1px 0 #f2f2f2; background: linear-gradient(#dadada, #d2d2d2); }
.tabs .on { background: #ececec; border-bottom-color: #ececec; border-left: 2px solid #919191; border-radius: 8px 8px 0 0; }
.tabs .rest { border-right: 0; border-radius: 0; }

.tools > i { width: 60px; height: 60px; position: relative; display: block; }
.tools svg { width: 60px; height: 60px; }
.tools .more::after { content: ""; position: absolute; left: 44px; top: 42px; border: 5px solid transparent; border-top: 10px solid #333; border-bottom: 0; }
.toolbar { height: 62px; display: flex; background: #ebebeb; border-bottom: 2px solid #cfcfcf; }
.tools * { vector-effect: non-scaling-stroke; }
.k { stroke: #000; stroke-width: 2.200px; }
.k1 { stroke: #1a2a60; stroke-width: 1.200px; fill: none; }
.k1[fill] { fill: #f08a1c; stroke: #000; }
.k4 { stroke: #000; stroke-width: 4.500px; fill: none; }
path.n, rect.n, ellipse.n { fill: none; }
.dash { stroke-dasharray: 4 4; }
.g { stroke: #7a7a7a; stroke-width: 2px; fill: none; }
.g1 { stroke: #777; stroke-width: 1px; fill: none; }
.h { fill: #fff; stroke: #000; stroke-width: 2.200px; }
.navy { stroke: #1c3578; stroke-width: 2.200px; fill: none; }
.red { stroke: #d01020; stroke-width: 4px; }
.grn { stroke: #1ca01c; stroke-width: 3px; }
.or { stroke: #a55a10; stroke-width: 2px; }
.w3 { stroke: #fff; stroke-width: 5px; }
.w4 { stroke: #fff; stroke-width: 5px; fill: none; }
.wheel { display: block; width: 37px; height: 37px; margin: 10px 0 0 11px; float: left; border-radius: 50%; border: 1px solid #000; background: radial-gradient(circle, #ebebeb 0 9px, transparent 9.500px), conic-gradient(#f22, #fc0, #4f2, #0cf, #22f, #f0c, #f22); }

.main { height: 1486px; display: grid; grid-template-columns: 262px 2098px 520px; }
.left { border-right: 2px solid #808080; background: #ececec; }
.strip { height: 50px; background: linear-gradient(#f6f6f6, #dfdfdf); border-bottom: 2px solid #cbcbcb; }
.command { margin: 23px 17px 0; height: 42px; background: #fff; border: 1px solid #b4b4b4; font-size: 26px; line-height: 43px; padding-left: 7px; color: #bcbcbc; }
.palette { display: grid; grid-template-columns: repeat(4, 60px); margin-top: 16px; }
.osnaps { margin-top: 103px; border-top: 3px solid #808080; padding: 10px 0 0 38px; color: #222; font-size: 22px; }
.osnaps label { display: flex; align-items: center; height: 36px; }
.osnaps .radio i { width: 28px; height: 28px; border-radius: 50%; background: #fff; border: 1px solid #b5b5b5; margin-right: 8px; }
.osnaps .radio.on i { border: 0; background: radial-gradient(circle, #fff 0 4px, #3e9bfb 5px); }
.checks { margin-top: 10px; }
.checks i { width: 24px; height: 24px; margin: 0 10px 0 2px; border-radius: 5px; background: #fff; border: 1px solid #b2b2b2; }
.checks .on i { border: 0; background: #3e9bfb; position: relative; }
.checks .on i::after { content: ""; position: absolute; left: 9px; top: 3px; width: 6px; height: 13px; border: solid #fff; border-width: 0 2.500px 2.500px 0; transform: rotate(40deg); }
.checks .off { color: #b2b2b2; }
.checks .off i { background: #f4f4f4; border-color: #cfcfcf; }

.viewbar { height: 52px; display: flex; align-items: center; background: linear-gradient(#f8f8f8, #e0e0e0); border-bottom: 2px solid #848484; font-size: 25.500px; color: #4f4f4f; }
.viewbar svg { width: 40px; height: 36px; fill: none; stroke: #4f4f4f; stroke-width: 2px; }
.viewbar .t { stroke-width: 4px; }
.viewbar .four { margin-left: 15px; stroke: #1a7fff; }
.viewbar .one { margin-left: 24px; }
.viewbar span { border-left: 2px solid #808080; height: 28px; line-height: 30px; }
.v1 { margin-left: 23px; width: 223px; padding-left: 37px; }
.viewbar .on { color: #1a7fff; }
.v2 { width: 125px; padding-left: 38px; }
.v3 { width: 144px; padding-left: 38px; }
.v4 { padding-left: 38px; }
.viewbar .layouts { margin-left: auto; margin-right: 25px; border: 0; color: #222; font-size: 24px; }
.views { display: grid; grid-template: 682px 746px / 1048px 1042px; gap: 6px; background: #dcdcdc; width: 2098px; border-right: 2px solid #808080; }
.view { position: relative; background: #9da3aa; overflow: hidden; }
.view svg { width: 100%; height: 100%; }
.view text { font-size: 22px; fill: #60636a; }
.name { position: absolute; left: 2px; top: 3px; height: 39px; line-height: 37px; padding: 0 7px; font-size: 24px; font-weight: 600; color: #fff; background: #8a8d90; border: 2px solid #828486; letter-spacing: .15px; }
.name.active { background: #2f5f93; border-color: #1f5593; }
.major { stroke: #83878f; stroke-width: 2; fill: none; vector-effect: non-scaling-stroke; }
.top-minor { stroke: #8b929b; stroke-opacity: .3; stroke-width: 1; }
.persp-minor { stroke: #868d96; stroke-opacity: .38; stroke-width: 1; vector-effect: non-scaling-stroke; }
.right-minor { stroke: #929aa1; stroke-width: 2; }
.right-major { stroke: #85888f; stroke-width: 2; }
.axis-g { stroke: #479947; stroke-width: 3; vector-effect: non-scaling-stroke; }
.axis-g.wide { stroke-width: 4; }
.axis-r { stroke: #93484a; stroke-width: 3; vector-effect: non-scaling-stroke; }
.model path { stroke: #101214; stroke-width: 4; stroke-linejoin: round; vector-effect: non-scaling-stroke; }
.model.m2 path { stroke-width: 3; stroke: #08090a; }
.model .thin, .model.m2 .thin { fill: none; stroke-width: 2; stroke: #000; }
.model.m2 .fat { fill: none; stroke-width: 5; }
.model.m2 .edge { fill: none; stroke-width: 2.500px; }
.gizmo { fill: none; stroke: #60636a; stroke-width: 2; }
.b4 { stroke: #0c0e10; stroke-width: 4; }
.b3 { stroke: #15181b; stroke-width: 2.500px; }
.b2 { stroke: #000; stroke-width: 2; }

.right { background: #ececec; }
.panel { height: 751px; display: flex; flex-direction: column; }
.panel + .panel { height: 735px; }
.panel-tabs { height: 52px; flex: none; display: flex; padding-left: 20px; background: linear-gradient(#f7f7f7, #e0e0e0); border-bottom: 2px solid #c9c9c9; }
.panel-tabs svg { width: 48px; height: 50px; fill: none; stroke: #4a4a4a; stroke-width: 1.800px; margin-top: -1px; }
.panel-tabs .sel { stroke: #1a7fff; stroke-width: 2px; }
.row { display: grid; grid-template-columns: 162px 46px 46px 46px 60px 48px 1fr; height: 34px; align-items: center; justify-items: center; }
.row > :first-child { justify-self: start; padding-left: 38px; }
.row.head { height: 44px; background: #fff; border-bottom: 2px solid #d8d8d8; color: #444; flex: none; }
.row.head span { height: 36px; line-height: 35px; width: 100%; border-right: 2px solid #dfdfdf; }
.row.head span:first-child { padding-left: 8px; }
.row.head span:last-child { border: 0; padding-left: 8px; }
.list { flex: 1; background: #fff; color: #1c1c1c; margin-top: -1px; }
.pick { width: 28px; height: 28px; border-radius: 50%; border: 1.500px solid #b5b5b5; background: #fff; }
.pick.on { border: 0; background: radial-gradient(circle, #fff 0 4px, #3e9bfb 5px); }
.sw { width: 28px; height: 28px; border: 2px solid #000; }
.row svg { width: 28px; height: 30px; }
.dim { opacity: .4; }
.lt { display: flex; width: 100%; padding: 4px 4px 0 13px; justify-content: space-between; align-items: center; }
.row .lt svg { width: 12px; height: 22px; fill: none; stroke: #444; stroke-width: 2.200px; margin-right: 1px; }
.foot { height: 66px; flex: none; border-top: 2px solid #d3d3d3; background: #ebebeb; padding: 13px 0 0 37px; display: flex; }
.panel:first-child .foot { height: 69px; border-bottom: 3px solid #808080; }
.btn { height: 34px; background: linear-gradient(#fff, #f3f3f3); border: 1px solid #c8c8c8; border-bottom-color: #aaa; border-radius: 6px; }
.add { width: 93px; margin-right: 35px; }
.gear { width: 70px; }
.btn svg { height: 32px; width: 100%; fill: none; stroke: #4a4a4a; stroke-width: 2px; }
.btn .dis { stroke: #d0d0d0; }
.btn .gr { stroke: #222; stroke-width: 4.500px; }
.btn .gt { stroke: #222; stroke-width: 4px; }

.statusbar { height: 56px; display: flex; align-items: center; background: linear-gradient(#dadada, #d0d0d0); border-top: 2px solid #cfcfcf; font-size: 22px; color: #000; }
.statusbar span { flex: none; }
.grip { width: 28px; height: 22px; margin-left: 9px; margin-right: 6px; background: repeating-linear-gradient(#777 0 2px, transparent 2px 6.500px); }
.prompt { width: 1816px; letter-spacing: .1px; padding-top: 2px; }
.unit { width: 148px; color: #222; padding-top: 2px; }
.cplane { width: 139px; height: 32px; line-height: 30px; border: 2px solid #979797; border-radius: 7px; padding-left: 12px; margin-right: 28px; display: flex; justify-content: space-between; align-items: center; padding-right: 8px; }
.cplane svg { width: 14px; height: 22px; fill: none; stroke: #8a8a8a; stroke-width: 2px; }
.cx { width: 165px; padding-top: 2px; }
.cy { width: 170px; padding-top: 2px; }
.cz { padding-top: 2px; }

.note { position: absolute; left: 2152px; top: 84px; width: 688px; height: 126px; border-radius: 13px; background: #f0f0f0; box-shadow: 0 4px 26px rgba(0, 0, 0, .28), 0 0 2px rgba(0, 0, 0, .4); display: grid; grid-template-columns: 102px 445px 141px; color: #404040; }
.note svg { width: 60px; height: 60px; margin: 33px 0 0 22px; }
.mon { font-size: 13px; fill: #fff; text-anchor: middle; }
.day { font-size: 29px; fill: #222; text-anchor: middle; font-weight: 300; }
.text { display: flex; flex-direction: column; padding-top: 16px; }
.text b, .text span { height: 32px; line-height: 32px; font-size: 22px; font-weight: 500; }
.text b { font-size: 23.500px; }
.text .time { font-size: 22px; }
.text span { font-weight: 400; }
.acts { display: grid; grid-template-rows: 63px 63px; border-left: 2px solid #dadada; text-align: center; font-size: 24px; font-weight: 500; color: #777; line-height: 66px; }
.acts span { padding-right: 2px; }
.acts span:first-child { border-bottom: 2px solid #dadada; line-height: 65px; }
```
FILE: app.js
```js
const byId = id => document.getElementById(id);
document.querySelectorAll('.tools svg').forEach(s => s.setAttribute('preserveAspectRatio', 'none'));

// Flat grids
function flatGrid(x0, y0, x1, y1, cx, cy, step) {
  let d = '';
  for (let x = cx + Math.ceil((x0 - cx) / step - 1e-6) * step; x <= x1 + .1; x += step) d += `M${x} ${y0}V${y1}`;
  for (let y = cy + Math.ceil((y0 - cy) / step - 1e-6) * step; y <= y1 + .1; y += step) d += `M${x0} ${y}H${x1}`;
  return d;
}
byId('top-minor').setAttribute('d', flatGrid(469.100, 243.100, 1194, 968, 831.600, 605.600, 3.625));
byId('top-major').setAttribute('d', flatGrid(469.100, 243.100, 1194, 968, 831.600, 605.600, 36.250));
byId('right-minor').setAttribute('d', flatGrid(1316, 998, 2358, 1744, 1965, 1365, 24.180));
byId('right-major').setAttribute('d', flatGrid(1316, 998, 2358, 1744, 1965, 1365, 241.800));

// Construction plane in perspective
const project = (i, j) => {
  const w = 1 - .02366 * i + .01693 * j;
  return `${((752 + 35.85 * i + 84.2 * j) / w).toFixed(1)} ${((965 + 56.9 * i - 44.8 * j) / w).toFixed(1)}`;
};
let major = '', minor = '';
for (let n = -100; n <= 100; n++) {
  const v = n / 10;
  const d = `M${project(v, -10)}L${project(v, 10)}M${project(-10, v)}L${project(10, v)}`;
  if (n % 10) minor += d; else major += d;
}
byId('persp-major').setAttribute('d', major);
byId('persp-minor').setAttribute('d', minor);
byId('plane').setAttribute('d', `M${project(-10, -10)}L${project(-10, 10)}L${project(10, 10)}L${project(10, -10)}z`);

// Vertical edges in the Right view: [centre, width] pairs
const bars = [62,3,407,9,576,3,580,2,645,2,735,8,743,5,752,5,785,9,838,14,860,3,889,8,913,3,927,3,940,7,961,7,966,3,971,4,989,14,1009,3,1014,3,1020,5,1040,6,1050,6,1068,5,1076,4,1098,15,1151,5,1163,13,1172,4,1181,7,1205,6,1224,6,1234,3,1253,6,1259,3,1267,3,1276,3,1288,6,1295,5,1331,16,1344,5,1352,6,1415,9,1428,3,1434,2,1480,6,1528,10,1535,3,1553,3];
let b = '';
for (let k = 0; k < bars.length; k += 2) {
  const w = bars[k + 1] * .625, x = 1380 + bars[k] * .625 - w / 2;
  b += `M${x} 1272h${w}V1365h${-w}z`;
}
byId('right-bars').setAttribute('d', b);

// Layer rows
const layers = [['Default', '#000'], ['Layer 01', '#ff2b1a'], ['Layer 02', '#8f4bd4'], ['Layer 03', '#0a3cff'], ['Layer 04', '#008c10'], ['Layer 05', '#fff']];
document.querySelector('.list').innerHTML = layers.map(([name, color], n) => `
  <div class="row"><span>${name}</span><i class="pick${n ? '' : ' on'}"></i>
  <svg viewBox="0 0 28 30"${n ? '' : ' class="dim"'}><path d="M10 21Q9 17 5 13 1 9 3 5 6 1 14 1 22 1 25 5 27 9 23 13 19 17 18 21z" fill="url(#bulb)" stroke="#e8a030" stroke-width=".8"/><path d="M10 21H18V26Q17 29 14 29 11 29 10 26z" fill="#c9d0da"/><path d="M10 23.500H18" stroke="#8d97a6"/></svg>
  <svg viewBox="0 0 28 30"${n ? '' : ' class="dim"'}><path d="M15 14V8Q15 2.500 20 2.500 25.500 2.500 25.500 8V12" fill="none" stroke="#8a8a8a" stroke-width="4"/><path d="M15 14V8Q15 2.500 20 2.500 25.500 2.500 25.500 8V12" fill="none" stroke="#eee" stroke-width="1.500"/><path d="M1 16Q1 13 4 13H18Q20 13 20 16V28H1z" fill="url(#lock)"/><path d="M2 18H19M2 22H19M2 26H19" stroke="#8a4a10" stroke-opacity=".5"/></svg>
  <i class="sw" style="background:${color}"></i>
  <svg viewBox="0 0 28 30"><circle cx="14" cy="15.500" r="11.500" fill="url(#mat)"/></svg>
  <span class="lt">Conti...<svg viewBox="0 0 12 22"><path d="M1 8l5-6 5 6M1 14l5 6 5-6"/></svg></span></div>`).join('');
const second = byId('layers').cloneNode(true);
second.removeAttribute('id');
document.querySelector('aside.right').append(second);
```
